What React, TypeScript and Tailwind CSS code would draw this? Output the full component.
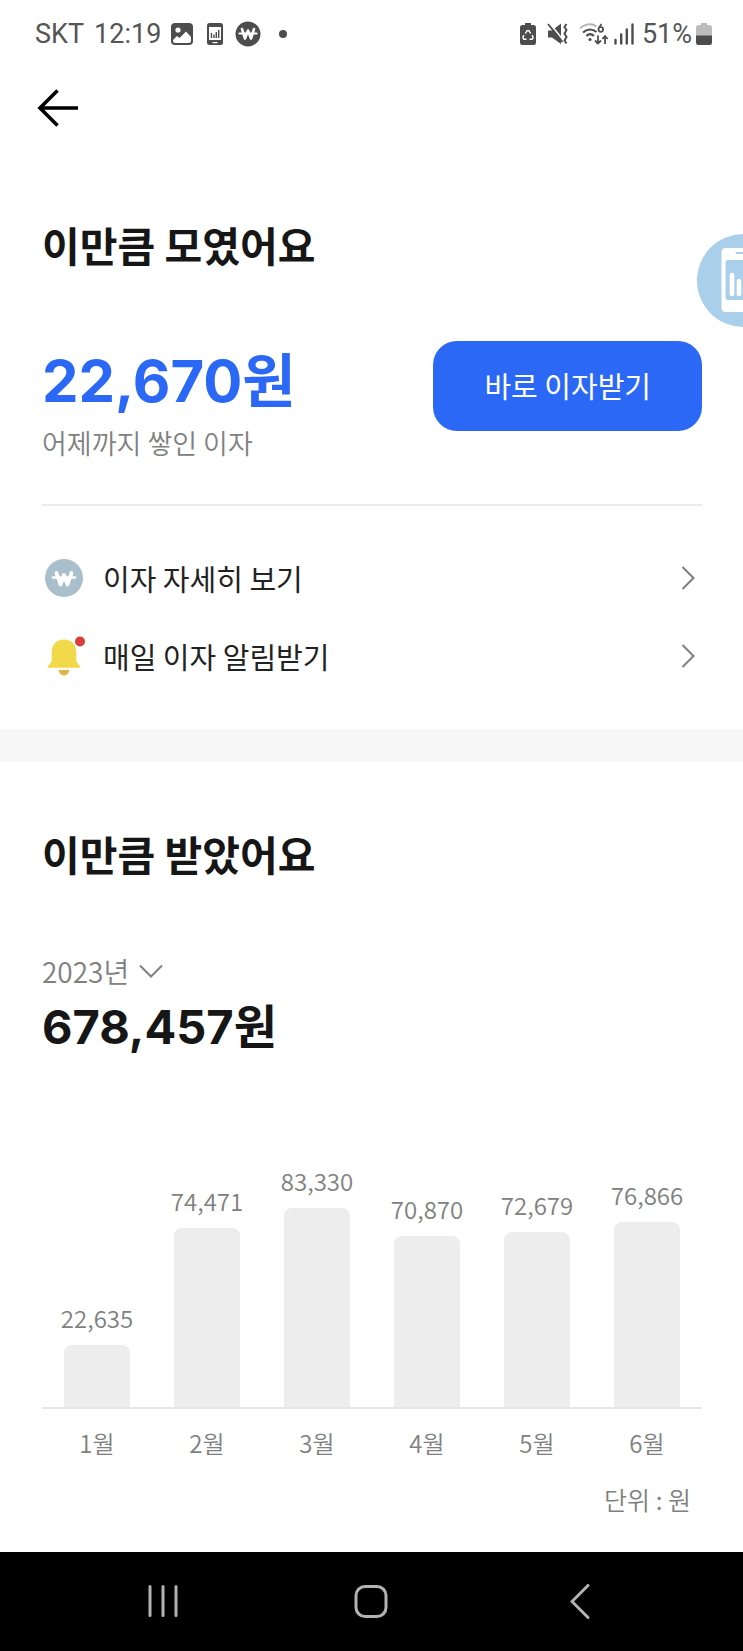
import type { ReactNode } from "react";

const KR = 'font-["Noto_Sans_CJK_KR",sans-serif]';
const NUM = 'font-["Inter","Noto_Sans_CJK_KR",sans-serif]';

const MONTHS = [
  { month: "1월", value: 22635 },
  { month: "2월", value: 74471 },
  { month: "3월", value: 83330 },
  { month: "4월", value: 70870 },
  { month: "5월", value: 72679 },
  { month: "6월", value: 76866 },
];

const barHeight = (value: number) => Math.round(11 + value * 0.00226);

function StatusBar() {
  return (
    <div className='flex h-[68px] items-center justify-between pl-[35px] pr-[31px] font-["Roboto",sans-serif] text-[27px] leading-8 text-[#555]'>
      <div className="flex items-center">
        <span>SKT</span>
        <span className="ml-[10px]">12:19</span>
        <svg className="ml-[10px]" width="22" height="22" viewBox="0 0 22 22" aria-hidden="true">
          <rect width="22" height="22" rx="4" fill="#4d4d4d" />
          <circle cx="7" cy="7" r="2.6" fill="#fff" />
          <path d="M2 17l4-4 2.5 2 6.500-6.500L20 14v3.500a2.500 2.500 0 0 1-2.500 2.500h-13A2.500 2.500 0 0 1 2 17.500z" fill="#fff" />
        </svg>
        <svg className="ml-[14px]" width="16" height="22" viewBox="0 0 16 22" aria-hidden="true">
          <rect width="16" height="22" rx="2.500" fill="#4d4d4d" />
          <rect x="2" y="4" width="12" height="13" fill="#fff" />
          <path d="M4.500 10v5M7 11.500V15M9.300 9v6M11.700 7v8" stroke="#4d4d4d" strokeWidth="1.400" />
          <path d="M5.500 19.600h5" stroke="#fff" strokeWidth="1.200" />
        </svg>
        <svg className="ml-3" width="26" height="26" viewBox="0 0 26 26" aria-hidden="true">
          <circle cx="13" cy="13" r="12.500" fill="#4d4d4d" />
          <path d="M7 8l3 9.500L13 9.500l3 8L19 8" fill="none" stroke="#fff" strokeWidth="2.600" strokeLinejoin="round" strokeLinecap="round" />
          <path d="M4.500 12.500h17" stroke="#fff" strokeWidth="2.200" strokeLinecap="round" />
        </svg>
        <span className="ml-[18px] size-2 rounded-full bg-[#4d4d4d]" />
      </div>
      <div className="flex items-center">
        <svg width="16" height="22" viewBox="0 0 16 22" aria-hidden="true">
          <path d="M5 0h6v2h2.500A2.500 2.500 0 0 1 16 4.500v15a2.500 2.500 0 0 1-2.500 2.500h-11A2.500 2.500 0 0 1 0 19.500v-15A2.500 2.500 0 0 1 2.500 2H5z" fill="#4d4d4d" />
          <path d="M5.300 10.500L7 7.800h2l1.700 2.700M12 12l1.200 2.300-1 2H9.500M6.500 16.300H3.800l-1-2L4 12" fill="none" stroke="#fff" strokeWidth="1.400" />
        </svg>
        <svg className="ml-[11px]" width="22" height="22" viewBox="0 0 22 22" aria-hidden="true">
          <path d="M1 7.500h4l9-7V21l-9-6.500H1z" fill="#4d4d4d" />
          <path d="M2.500 0l14 17.500" stroke="#fff" strokeWidth="1.600" />
          <path d="M1 1l14.500 18" stroke="#4d4d4d" strokeWidth="1.900" />
          <path d="M19.500 1l-2 3 2 3-2 3.500 2 3.500-2 3.500 2 3" fill="none" stroke="#4d4d4d" strokeWidth="2" />
        </svg>
        <svg className="ml-[10px]" width="30" height="22" viewBox="0 0 30 22" aria-hidden="true">
          <path d="M1 5.500C5.500 0.500 13 0 17.500 3.500" fill="none" stroke="#b5b5b5" strokeWidth="1.800" />
          <path d="M4 9.500c4-4 9.500-4 13.500-.5M7.300 13c2.400-2.300 5.400-2.300 7.700 0" fill="none" stroke="#4d4d4d" strokeWidth="2" />
          <circle cx="11" cy="16.500" r="1.600" fill="#4d4d4d" />
          <path d="M22.500 1l-2.600 4" stroke="#4d4d4d" strokeWidth="1.700" />
          <circle cx="21.800" cy="6.500" r="2.300" fill="none" stroke="#4d4d4d" strokeWidth="1.700" />
          <path d="M19 12.500v7.500M16 17.500l3 3 3-3M26 21v-7.500M23.300 16l2.700-3 2.700 3" fill="none" stroke="#4d4d4d" strokeWidth="1.800" />
        </svg>
        <svg className="ml-[5px]" width="20" height="22" viewBox="0 0 20 22" aria-hidden="true">
          <path d="M1.500 17v3.500M7.200 11.500v9M12.800 6.500v14M18.500 1.500v19" stroke="#4d4d4d" strokeWidth="2.400" strokeLinecap="round" />
        </svg>
        <span className="ml-2">51%</span>
        <svg className="ml-1" width="16" height="22" viewBox="0 0 16 22" aria-hidden="true">
          <path d="M5 0h6v2h2.500A2.500 2.500 0 0 1 16 4.500V13H0V4.500A2.500 2.500 0 0 1 2.500 2H5z" fill="#bdbdbd" />
          <path d="M0 12.500h16v7a2.500 2.500 0 0 1-2.500 2.500h-11A2.500 2.500 0 0 1 0 19.500z" fill="#4d4d4d" />
        </svg>
      </div>
    </div>
  );
}

function WonIcon() {
  return (
    <svg width="44" height="44" viewBox="0 0 44 44" aria-hidden="true">
      <circle cx="22" cy="22" r="19" fill="#a9bfcb" />
      <path d="M14.500 17l4 11.500 3.500-9.500 3.500 9.500 4-11.500" fill="none" stroke="#fff" strokeWidth="3.800" strokeLinejoin="round" strokeLinecap="round" />
      <path d="M11 21.500h22" stroke="#fff" strokeWidth="2.600" strokeLinecap="round" />
    </svg>
  );
}

function BellIcon() {
  return (
    <svg width="44" height="44" viewBox="0 0 44 44" aria-hidden="true">
      <path d="M16.500 36h11c-.8 3.500-2.700 5.500-5.500 5.500s-4.700-2-5.500-5.500z" fill="#dcb545" />
      <path d="M22 5.500c7.500 0 12.300 5.500 12.300 12.500v8.500c0 2.500 4.200 5 4.200 7.200H5.500c0-2.200 4.200-4.700 4.200-7.200V18C9.700 11 14.500 5.500 22 5.500z" fill="#f2d94a" />
      <circle cx="38" cy="7.500" r="5" fill="#d93f38" />
    </svg>
  );
}

function MenuRow({ icon, label }: { icon: ReactNode; label: string }) {
  return (
    <a href="#" className="flex h-[78px] items-center">
      {icon}
      <span className="ml-[17px] flex-1 text-[29px] leading-10 text-[#222]">{label}</span>
      <svg className="mr-[7px]" width="14" height="24" viewBox="0 0 14 24" aria-hidden="true">
        <path d="M1.500 1l11 11-11 11" fill="none" stroke="#7d7d7d" strokeWidth="2" />
      </svg>
    </a>
  );
}

export default function App() {
  return (
    <div className={`${KR} relative flex min-h-screen flex-col overflow-hidden bg-white text-[#161616]`}>
      <StatusBar />
      <header className="flex h-20 items-center px-9">
        <button type="button" aria-label="뒤로">
          <svg width="44" height="40" viewBox="0 0 44 40" fill="none" stroke="#000" strokeWidth="3.600" aria-hidden="true">
            <path d="M42 20H4M21.500 2.500L4 20l17.500 17.500" />
          </svg>
        </button>
      </header>

      <button
        type="button"
        aria-label="리포트"
        className="absolute -right-[47px] top-[234px] size-[93px] overflow-hidden rounded-full bg-[#a9cfeb]"
      >
        <svg width="93" height="93" viewBox="0 0 93 93" aria-hidden="true">
          <rect x="24.500" y="14" width="44" height="64" rx="4" fill="#fff" />
          <rect x="28.500" y="26" width="36" height="40" rx="3" fill="#a9cfeb" />
          <path d="M39.500 19h14" stroke="#a9cfeb" strokeWidth="2" strokeLinecap="round" />
          <path d="M35 41v19M42 47v13M49 37v23M56.500 33v27" stroke="#fff" strokeWidth="4.600" strokeLinecap="round" />
        </svg>
      </button>

      <main className="flex-1">
        <section className="pb-[34px] pl-[42px] pr-[41px] pt-[66px]">
          <h1 className="text-[41px] font-bold leading-[60px]">이만큼 모였어요</h1>
          <div className="mt-[67px] flex items-start justify-between">
            <div className="pt-2">
              <p className={`${NUM} text-[58px] font-bold leading-[64px] text-[#2b68f6]`}>22,670원</p>
              <p className="mt-[10px] text-[27px] font-[350] leading-10 text-[#808080]">어제까지 쌓인 이자</p>
            </div>
            <button type="button" className="h-[90px] rounded-3xl bg-[#2b68f6] px-[51px] text-[29px] text-white">
              바로 이자받기
            </button>
          </div>
          <hr className="mb-[33px] mt-[41px] border-t-2 border-[#ebebeb]" />
          <MenuRow icon={<WonIcon />} label="이자 자세히 보기" />
          <MenuRow icon={<BellIcon />} label="매일 이자 알림받기" />
        </section>

        <div className="h-[33px] bg-[#f7f7f7]" />

        <section className="pl-[42px] pr-[41px] pt-[61px]">
          <h2 className="text-[41px] font-bold leading-[60px]">이만큼 받았어요</h2>
          <button type="button" className="mt-[68px] flex items-center gap-[10px] text-[28px] font-[350] leading-10 text-[#808080]">
            2023년
            <svg width="24" height="14" viewBox="0 0 24 14" fill="none" stroke="#808080" strokeWidth="2" aria-hidden="true">
              <path d="M1 1.500l11 11 11-11" />
            </svg>
          </button>
          <p className={`${NUM} mt-[6px] text-[47px] font-bold leading-[60px]`}>678,457원</p>

          <div className="mt-[106px] grid grid-cols-6 items-end border-b-2 border-[#e6e6ee]">
            {MONTHS.map((m) => (
              <div key={m.month} className="flex flex-col items-center">
                <span className="mb-[9px] text-[24px] font-[350] leading-9 text-[#808080]">{m.value.toLocaleString("en-US")}</span>
                <div className="w-3/5 rounded-t-lg bg-[#ededed]" style={{ height: barHeight(m.value) }} />
              </div>
            ))}
          </div>
          <div className="mt-4 grid grid-cols-6 text-center text-[24px] font-[350] leading-9 text-[#808080]">
            {MONTHS.map((m) => (
              <span key={m.month}>{m.month}</span>
            ))}
          </div>
          <p className="mb-[34px] mt-5 pr-[11px] text-right text-[25px] font-[350] leading-9 text-[#808080]">단위 : 원</p>
        </section>
      </main>

      <nav className="grid h-[99px] grid-cols-3 place-items-center bg-black px-[59px]">
        <button type="button" aria-label="최근 앱">
          <svg width="32" height="34" viewBox="0 0 32 34" stroke="#b3b3b3" strokeWidth="3" strokeLinecap="round" aria-hidden="true">
            <path d="M3 1.500v29M16 1.500v29M29 1.500v29" />
          </svg>
        </button>
        <button type="button" aria-label="홈">
          <svg width="34" height="34" viewBox="0 0 34 34" fill="none" stroke="#b3b3b3" strokeWidth="3" aria-hidden="true">
            <rect x="2" y="1.500" width="30" height="30" rx="9" />
          </svg>
        </button>
        <button type="button" aria-label="뒤로 가기">
          <svg width="20" height="36" viewBox="0 0 20 36" fill="none" stroke="#b3b3b3" strokeWidth="3" strokeLinecap="round" aria-hidden="true">
            <path d="M18 1.500L2 17.500l16 16" />
          </svg>
        </button>
      </nav>
    </div>
  );
}
